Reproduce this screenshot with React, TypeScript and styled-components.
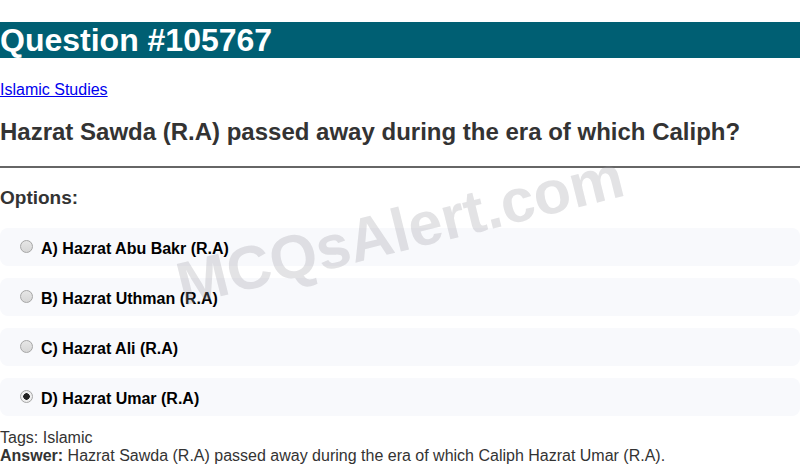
import React from 'react';
import styled, { createGlobalStyle } from 'styled-components';

const GlobalStyle = createGlobalStyle`
  body {
    margin: 0;
    font-family: "Liberation Sans", Arial, sans-serif;
    background: #fff;
  }
`;

const Page = styled.div`
  position: relative;
  overflow: hidden;
  padding-top: 22px;
`;

const TitleBar = styled.h1`
  margin: 0;
  background: #005f73;
  color: #fff;
  font-size: 32px;
  font-weight: bold;
  line-height: 36px;
`;

const Category = styled.a`
  display: block;
  margin-top: 23px;
  color: #0000ee;
  font-size: 16px;
  line-height: 18px;
  text-decoration: underline;
`;

const QuestionText = styled.h2`
  margin: 19px 0 0;
  color: #333;
  font-size: 24px;
  font-weight: bold;
  line-height: 28px;
`;

const Divider = styled.hr`
  margin: 20px 0 0;
  border: none;
  border-top: 2px solid #666;
  height: 0;
`;

const OptionsHeading = styled.h3`
  margin: 19px 0 0;
  color: #333;
  font-size: 19px;
  font-weight: bold;
  line-height: 22px;
`;

const OptionList = styled.div`
  display: flex;
  flex-direction: column;
  gap: 12px;
  margin-top: 19px;
`;

const Option = styled.label`
  display: flex;
  align-items: center;
  height: 38px;
  padding-left: 20px;
  padding-top: 4px;
  box-sizing: border-box;
  background: #f8f9fc;
  border-radius: 8px;
  font-size: 16px;
  font-weight: bold;
  color: #000;
`;

const Radio = styled.span<{ $checked: boolean }>`
  box-sizing: border-box;
  width: 13px;
  height: 13px;
  margin-right: 8px;
  margin-top: -5px;
  border-radius: 50%;
  border: 1px solid #a6a6a6;
  background: ${p =>
    p.$checked
      ? 'radial-gradient(circle, #222 0 3px, #eee 3.5px)'
      : 'linear-gradient(#e6e6e6, #d6d6d6)'};
`;

const Meta = styled.div`
  margin-top: 13px;
  font-size: 16px;
  line-height: 18px;
  color: #333;
`;

const Watermark = styled.div`
  position: absolute;
  left: 400px;
  top: 230px;
  transform: translate(-50%, -50%) rotate(-14deg);
  font-size: 61px;
  font-weight: bold;
  color: rgba(150, 150, 158, 0.27);
  white-space: nowrap;
  pointer-events: none;
`;

const options = [
  'A) Hazrat Abu Bakr (R.A)',
  'B) Hazrat Uthman (R.A)',
  'C) Hazrat Ali (R.A)',
  'D) Hazrat Umar (R.A)',
];

export default function App() {
  return (
    <Page>
      <GlobalStyle />
      <TitleBar>Question #105767</TitleBar>
      <Category href="#">Islamic Studies</Category>
      <QuestionText>Hazrat Sawda (R.A) passed away during the era of which Caliph?</QuestionText>
      <Divider />
      <OptionsHeading>Options:</OptionsHeading>
      <OptionList>
        {options.map((o, i) => (
          <Option key={o}>
            <Radio $checked={i === 3} />
            {o}
          </Option>
        ))}
      </OptionList>
      <Meta>
        Tags: Islamic
        <br />
        <b>Answer:</b> Hazrat Sawda (R.A) passed away during the era of which Caliph Hazrat Umar (R.A).
      </Meta>
      <Watermark>MCQsAlert.com</Watermark>
    </Page>
  );
}
